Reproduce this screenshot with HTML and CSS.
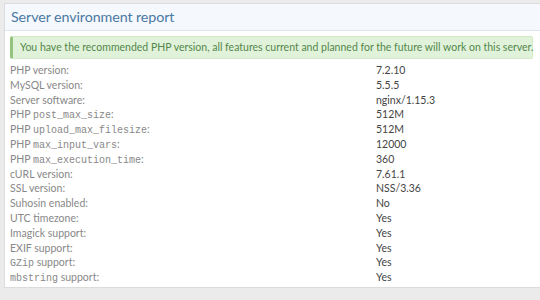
FILE: index.html
```html
<!DOCTYPE html>
<html>
<head>
<meta charset="utf-8">
<link rel="stylesheet" href="styles.css">
</head>
<body>
<div class="card">
  <div class="card-header">Server environment report</div>
  <div class="card-body">
    <div class="notice">You have the recommended PHP version, all features current and planned for the future will work on this server.</div>
    <dl class="pairs">
      <dt>PHP version:</dt><dd>7.2.10</dd>
      <dt>MySQL version:</dt><dd>5.5.5</dd>
      <dt>Server software:</dt><dd>nginx/1.15.3</dd>
      <dt>PHP <code>post_max_size</code>:</dt><dd>512M</dd>
      <dt>PHP <code>upload_max_filesize</code>:</dt><dd>512M</dd>
      <dt>PHP <code>max_input_vars</code>:</dt><dd>12000</dd>
      <dt>PHP <code>max_execution_time</code>:</dt><dd>360</dd>
      <dt>cURL version:</dt><dd>7.61.1</dd>
      <dt>SSL version:</dt><dd>NSS/3.36</dd>
      <dt>Suhosin enabled:</dt><dd>No</dd>
      <dt>UTC timezone:</dt><dd>Yes</dd>
      <dt>Imagick support:</dt><dd>Yes</dd>
      <dt>EXIF support:</dt><dd>Yes</dd>
      <dt><code>GZip</code> support:</dt><dd>Yes</dd>
      <dt><code>mbstring</code> support:</dt><dd>Yes</dd>
    </dl>
  </div>
</div>
</body>
</html>
```
FILE: styles.css
```css
html, body {
  margin: 0;
  padding: 0;
  background: #ebebeb;
}
body {
  padding: 3px 0 0 4px;
  font-family: Lato, "Noto Sans", sans-serif;
  font-size: 10.5px;
  overflow: hidden;
}
.card {
  background: #fff;
  border: 1px solid #dcdcdc;
  border-right: none;
  height: 285px;
  box-sizing: border-box;
}
.card-header {
  height: 27px;
  box-sizing: border-box;
  background: #f5f8fc;
  border-bottom: 1px solid #dde4ec;
  color: #4a79a3;
  font-size: 14.3px;
  letter-spacing: -0.1px;
  line-height: 25px;
  padding-left: 6px;
}
.card-body {
  padding: 5px 7px 0 5px;
}
.notice {
  background: #e1f2da;
  border: 1px solid #d2e9c8;
  border-left: 3px solid #93c47f;
  border-radius: 2px;
  color: #53874b;
  height: 23px;
  box-sizing: border-box;
  line-height: 21px;
  padding-left: 7px;
  white-space: nowrap;
}
.pairs {
  display: grid;
  grid-template-columns: 366px 1fr;
  margin: 4px 0 0 0;
  line-height: 14.8px;
}
.pairs dt {
  color: #888;
}
.pairs dd {
  margin: 0;
  color: #444;
}
code {
  font-family: "Liberation Mono", "DejaVu Sans Mono", monospace;
  font-size: 10px;
  line-height: 1;
}
```
